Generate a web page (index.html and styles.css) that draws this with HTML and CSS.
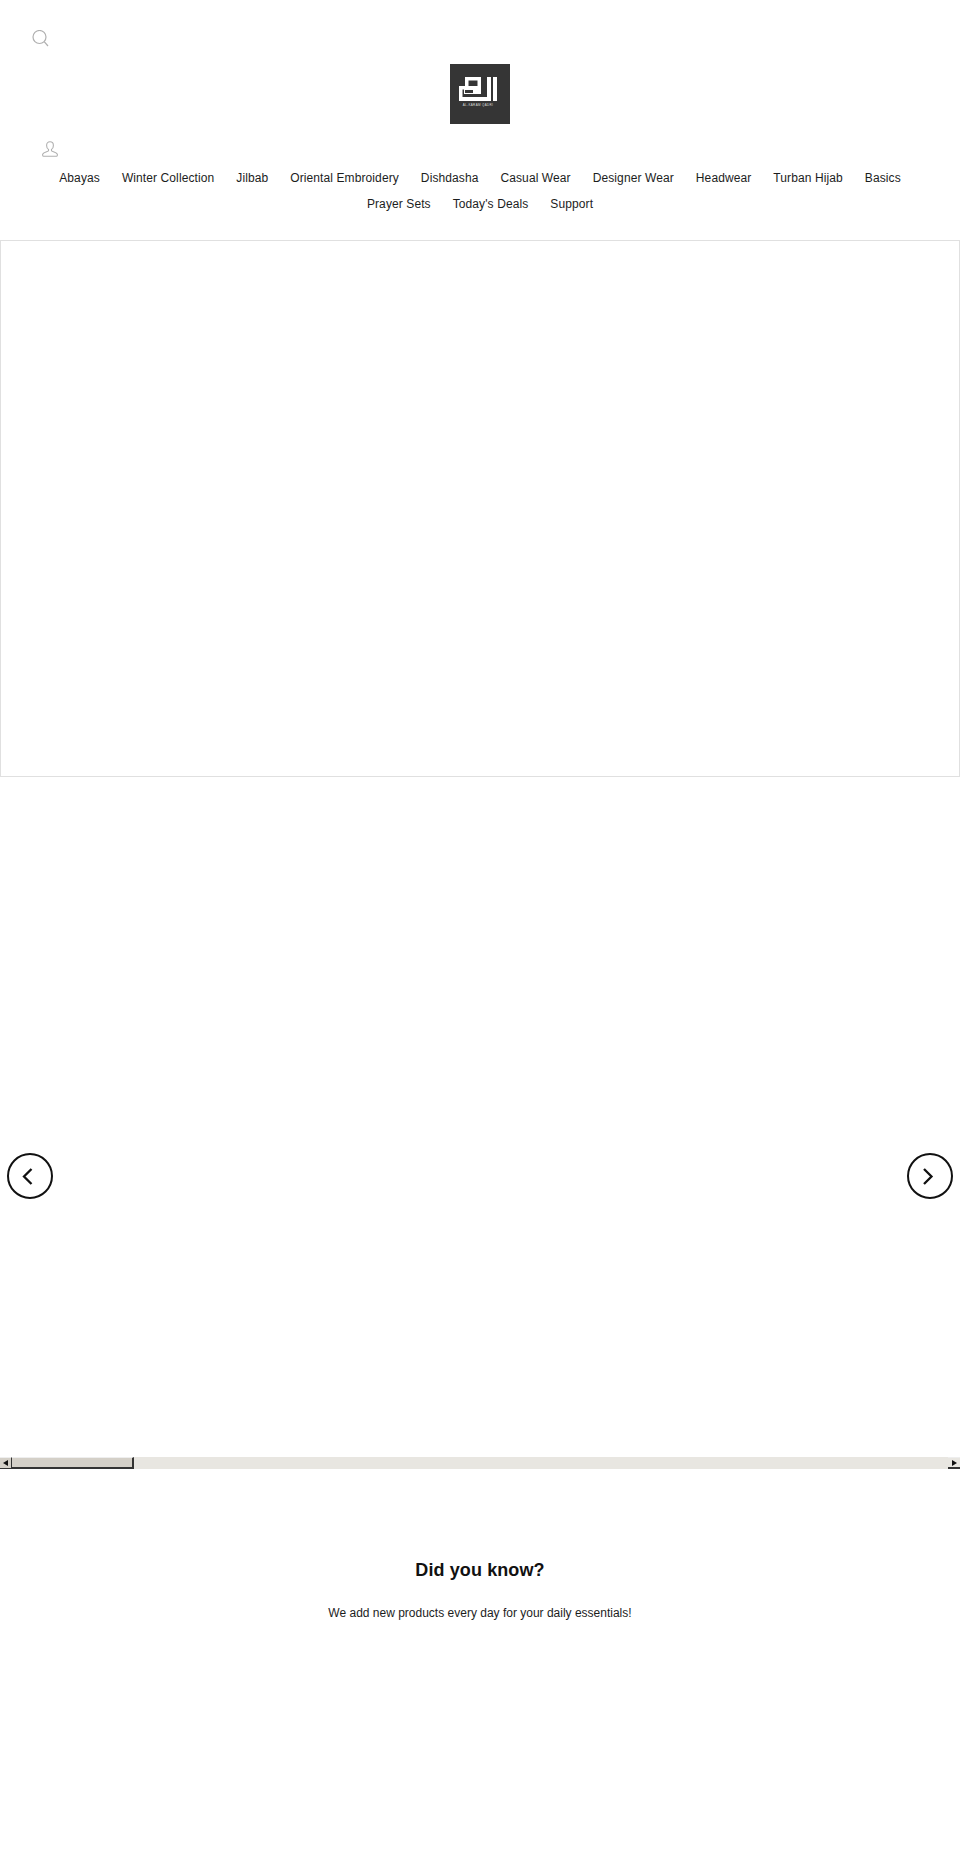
FILE: index.html
```html
<!DOCTYPE html>
<html lang="en">
<head>
<meta charset="utf-8">
<title>Al-Karam Qadri</title>
<link rel="stylesheet" href="styles.css">
</head>
<body>
<header class="header">
  <div class="icon-row search-row">
    <svg class="icon" width="17" height="17" viewBox="0 0 17 17" fill="none" stroke="#b0b0b0" stroke-width="1.200"><circle cx="7.500" cy="7" r="6.500"/><path d="M12.200 11.600 16 16"/></svg>
  </div>
  <div class="logo-row">
    <svg class="logo" width="60" height="60" viewBox="0 0 60 60">
      <rect width="60" height="60" fill="#353535"/>
      <g fill="#fff">
        <rect x="43" y="13" width="4" height="24"/>
        <rect x="37" y="13" width="4" height="24"/>
        <rect x="9" y="33" width="32" height="4"/>
        <rect x="9" y="22" width="3.500" height="15"/>
        <rect x="9" y="22" width="22" height="3.500"/>
        <rect x="15" y="13" width="16" height="3.500"/>
        <rect x="15" y="13" width="3.500" height="9"/>
        <rect x="27.500" y="13" width="3.500" height="17"/>
        <rect x="14" y="25" width="17" height="5"/>
      </g>
      <rect x="15" y="26" width="8" height="3" fill="#353535"/>
      <text x="28" y="41.500" class="logo-text">AL-KARAM QADRI</text>
    </svg>
  </div>
  <div class="icon-row account-row">
    <svg class="icon" width="16" height="16" viewBox="0 0 16 16" fill="none" stroke="#b0b0b0" stroke-width="1.100"><path d="M8 .8c2.200 0 3.400 1.600 3.400 3.600 0 1.800-.9 3.300-1.900 4v1.400c0 .7 4.900 1.600 5.700 3.200.4.800.1 2.300-.6 2.300H1.400c-.7 0-1-1.500-.6-2.300.8-1.600 5.700-2.500 5.700-3.200V8.400c-1-.7-1.900-2.200-1.900-4 0-2 1.200-3.600 3.400-3.600z"/></svg>
  </div>
  <nav class="nav">
    <a>Abayas</a><a>Winter Collection</a><a>Jilbab</a><a>Oriental Embroidery</a><a>Dishdasha</a><a>Casual Wear</a><a>Designer Wear</a><a>Headwear</a><a>Turban Hijab</a><a>Basics</a><a>Prayer Sets</a><a>Today's Deals</a><a>Support</a>
  </nav>
</header>
<main>
  <div class="placeholder"></div>
  <section class="carousel">
    <div class="slide-area"></div>
    <button class="arrow arrow-prev" aria-label="Previous">
      <svg width="16" height="20" viewBox="0 0 16 20" fill="none" stroke="#111" stroke-width="2.300"><path d="M9.500 3 2 10.500l7.500 7.500"/></svg>
    </button>
    <button class="arrow arrow-next" aria-label="Next">
      <svg width="16" height="20" viewBox="0 0 16 20" fill="none" stroke="#111" stroke-width="2.300"><path d="M2 3l7.500 7.500L2 18"/></svg>
    </button>
    <div class="scrollbar">
      <span class="sb-btn sb-left"></span>
      <span class="sb-thumb"></span>
      <span class="sb-track"></span>
      <span class="sb-btn sb-right"></span>
    </div>
  </section>
  <section class="notice">
    <h2>Did you know?</h2>
    <p>We add new products every day for your daily essentials!</p>
  </section>
</main>
</body>
</html>
```

FILE: styles.css
```css
* { box-sizing: border-box; }
html, body { margin: 0; padding: 0; background: #fff; }
body {
  font-family: "Liberation Sans", Arial, sans-serif;
  color: #1c1d1d;
  height: 1875px;
  overflow: hidden;
}
.header { height: 240px; padding-top: 30px; }
.icon-row { display: flex; height: 17px; }
.icon { display: block; }
.search-row { padding-left: 32px; }
.logo-row { display: flex; justify-content: center; margin-top: 17px; }
.logo-text { font-size: 3px; fill: #ddd; text-anchor: middle; letter-spacing: .35px; font-family: "Liberation Sans", sans-serif; }
.account-row { padding-left: 42px; margin-top: 17px; height: 16px; }
.nav {
  display: flex;
  flex-wrap: wrap;
  justify-content: center;
  margin-top: 8px;
  padding: 0 30px;
  font-size: 12px;
  line-height: 26px;
  letter-spacing: .1px;
}
.nav a { padding: 0 11px; }
.placeholder { height: 537px; border: 1px solid #e0e0e0; }
.carousel { position: relative; height: 692px; display: flex; flex-direction: column; justify-content: flex-end; }
.slide-area { flex: 1; }
.arrow {
  position: absolute;
  top: 376px;
  width: 46px;
  height: 46px;
  padding: 0;
  display: flex;
  align-items: center;
  justify-content: center;
  background: #fff;
  border: 2px solid #111;
  border-radius: 50%;
}
.arrow-prev { left: 7px; }
.arrow-next { right: 7px; }
.scrollbar { display: flex; height: 12px; background: #e8e6e1; }
.sb-btn {
  width: 12px;
  background: #d4d0c8;
  border-right: 1px solid #333;
  border-bottom: 1px solid #333;
  border-top: 1px solid #eee;
  position: relative;
}
.sb-btn::after {
  content: "";
  position: absolute;
  top: 2px;
  border-top: 3.500px solid transparent;
  border-bottom: 3.500px solid transparent;
}
.sb-left::after { left: 3px; border-right: 5px solid #111; }
.sb-right::after { left: 4px; border-left: 5px solid #111; }
.sb-right { background: #e8e6e1; border-right: 0; border-left: 0; border-bottom: 2px solid #333; }
.sb-thumb {
  width: 122px;
  background: #d4d0c8;
  border-top: 1px solid #eee;
  border-right: 2px solid #333;
  border-bottom: 2px solid #333;
}
.sb-track { flex: 1; }
.notice { text-align: center; padding-top: 89px; }
.notice h2 { margin: 0; font-size: 18px; line-height: 24px; font-weight: 700; letter-spacing: .1px; color: #111; }
.notice p { margin: 21px 0 0; font-size: 12px; line-height: 20px; }
```
